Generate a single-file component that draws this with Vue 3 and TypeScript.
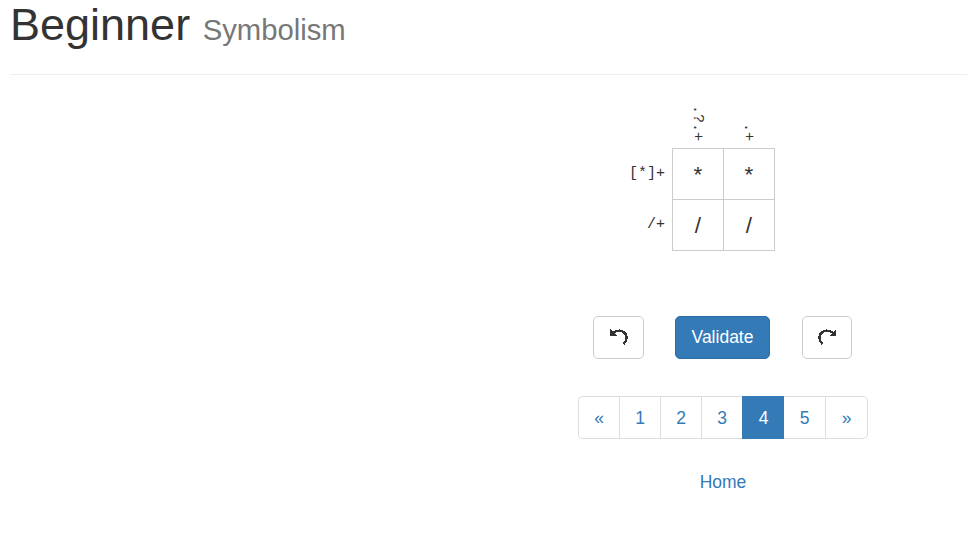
<script setup lang="ts">
import { ref } from 'vue'

const rowClues: string[] = ['[*]+', '/+']
const columnClues: string[] = ['.?.+', '.+']
const cells: string[][] = [['*', '*'], ['/', '/']]
const pages: string[] = ['«', '1', '2', '3', '4', '5', '»']
const current = ref('4')
</script>

<template>
  <div class="page">
    <header class="page-header">
      <h1>Beginner <small>Symbolism</small></h1>
    </header>
    <main class="content">
      <div class="puzzle">
        <span></span>
        <div v-for="clue in columnClues" :key="clue" class="column-clue"><span>{{ clue }}</span></div>
        <template v-for="(row, r) in cells" :key="r">
          <div class="row-clue">{{ rowClues[r] }}</div>
          <div v-for="(value, c) in row" :key="c" class="cell"><span>{{ value }}</span></div>
        </template>
      </div>
      <div class="actions">
        <button class="btn undo" type="button" aria-label="Undo">
          <svg width="20" height="18" viewBox="0 0 20 18" shape-rendering="crispEdges">
            <path d="M1 0 L1 7 L8 7 Z" fill="#333" />
            <path d="M4 4 C8 0.5 14 1 16.5 5 C18.5 8.5 17.5 12 14.5 15" fill="none" stroke="#333" stroke-width="2.4" />
          </svg>
        </button>
        <button class="btn primary" type="button">Validate</button>
        <button class="btn redo" type="button" aria-label="Redo">
          <svg width="20" height="18" viewBox="0 0 20 18" shape-rendering="crispEdges">
            <path d="M19 0 L19 7 L12 7 Z" fill="#333" />
            <path d="M16 4 C12 0.5 6 1 3.5 5 C1.5 8.5 2.5 12 5.5 15" fill="none" stroke="#333" stroke-width="2.4" />
          </svg>
        </button>
      </div>
      <ul class="pagination">
        <li v-for="page in pages" :key="page" :class="{ active: page === current }">
          <a href="#">{{ page }}</a>
        </li>
      </ul>
      <a class="home" href="#">Home</a>
    </main>
  </div>
</template>

<style>
body {
  background: #fff;
  overflow: hidden;
}
</style>

<style scoped>
.page {
  box-sizing: border-box;
  height: 541px;
  color: #333;
  font-family: "Liberation Sans", Arial, sans-serif;
  font-size: 17.5px;
  line-height: 25px;
}
.page-header {
  box-sizing: border-box;
  height: 75px;
  margin-left: 10px;
  border-bottom: 1px solid #eee;
}
h1 {
  margin: 0;
  font-size: 45px;
  font-weight: 400;
  line-height: 50px;
}
h1 small {
  color: #777;
  font-size: 29.25px;
}
.content {
  display: flex;
  flex-direction: column;
  align-items: center;
  width: 290px;
  margin-left: 578px;
}
.puzzle {
  display: grid;
  grid-template-columns: 94px 51px 51px;
  grid-template-rows: 73px 51px 51px;
  align-self: flex-start;
  border-bottom: 1px solid transparent;
}
.column-clue {
  display: flex;
  align-items: flex-end;
  justify-content: center;
  padding: 0 1px 7px 0;
  font: 15px/22px "Liberation Mono", monospace;
}
.column-clue span {
  writing-mode: vertical-rl;
}
.row-clue {
  display: flex;
  align-items: center;
  justify-content: flex-end;
  padding-right: 7px;
  font: 15px/22px "Liberation Mono", monospace;
}
.cell {
  display: flex;
  align-items: center;
  justify-content: center;
  width: 50px;
  height: 50px;
  border: 1px solid #ccc;
  font-size: 22.5px;
}
.actions {
  display: flex;
  align-self: stretch;
  padding-left: 15px;
  margin-top: 65px;
}
.btn {
  display: flex;
  align-items: center;
  justify-content: center;
  box-sizing: border-box;
  width: 51px;
  height: 43px;
  padding: 0;
  border: 1px solid #ccc;
  border-radius: 5px;
  color: #333;
  background: #fff;
  font: inherit;
}
.primary {
  width: 95px;
  margin: 0 32px 0 31px;
  border-color: #2e6da4;
  color: #fff;
  background: #337ab7;
}
.redo {
  width: 50px;
}
.pagination {
  display: flex;
  margin: 37px 0 0;
  padding: 0;
  list-style: none;
}
.pagination li {
  box-sizing: border-box;
  width: 41px;
  height: 43px;
  border: 1px solid #ddd;
  border-right: 0;
}
.pagination li:first-child {
  border-radius: 5px 0 0 5px;
}
.pagination li:last-child {
  width: 43px;
  border-right: 1px solid #ddd;
  border-radius: 0 5px 5px 0;
}
.pagination a {
  display: block;
  line-height: 42px;
  text-align: center;
}
a {
  color: #337ab7;
  text-decoration: none;
}
.pagination .active {
  width: 42px;
  border-color: #337ab7;
  background: #337ab7;
}
.pagination .active a {
  color: #fff;
}
.pagination .active + li {
  border-left: 0;
}
.home {
  margin-top: 31px;
}
</style>
